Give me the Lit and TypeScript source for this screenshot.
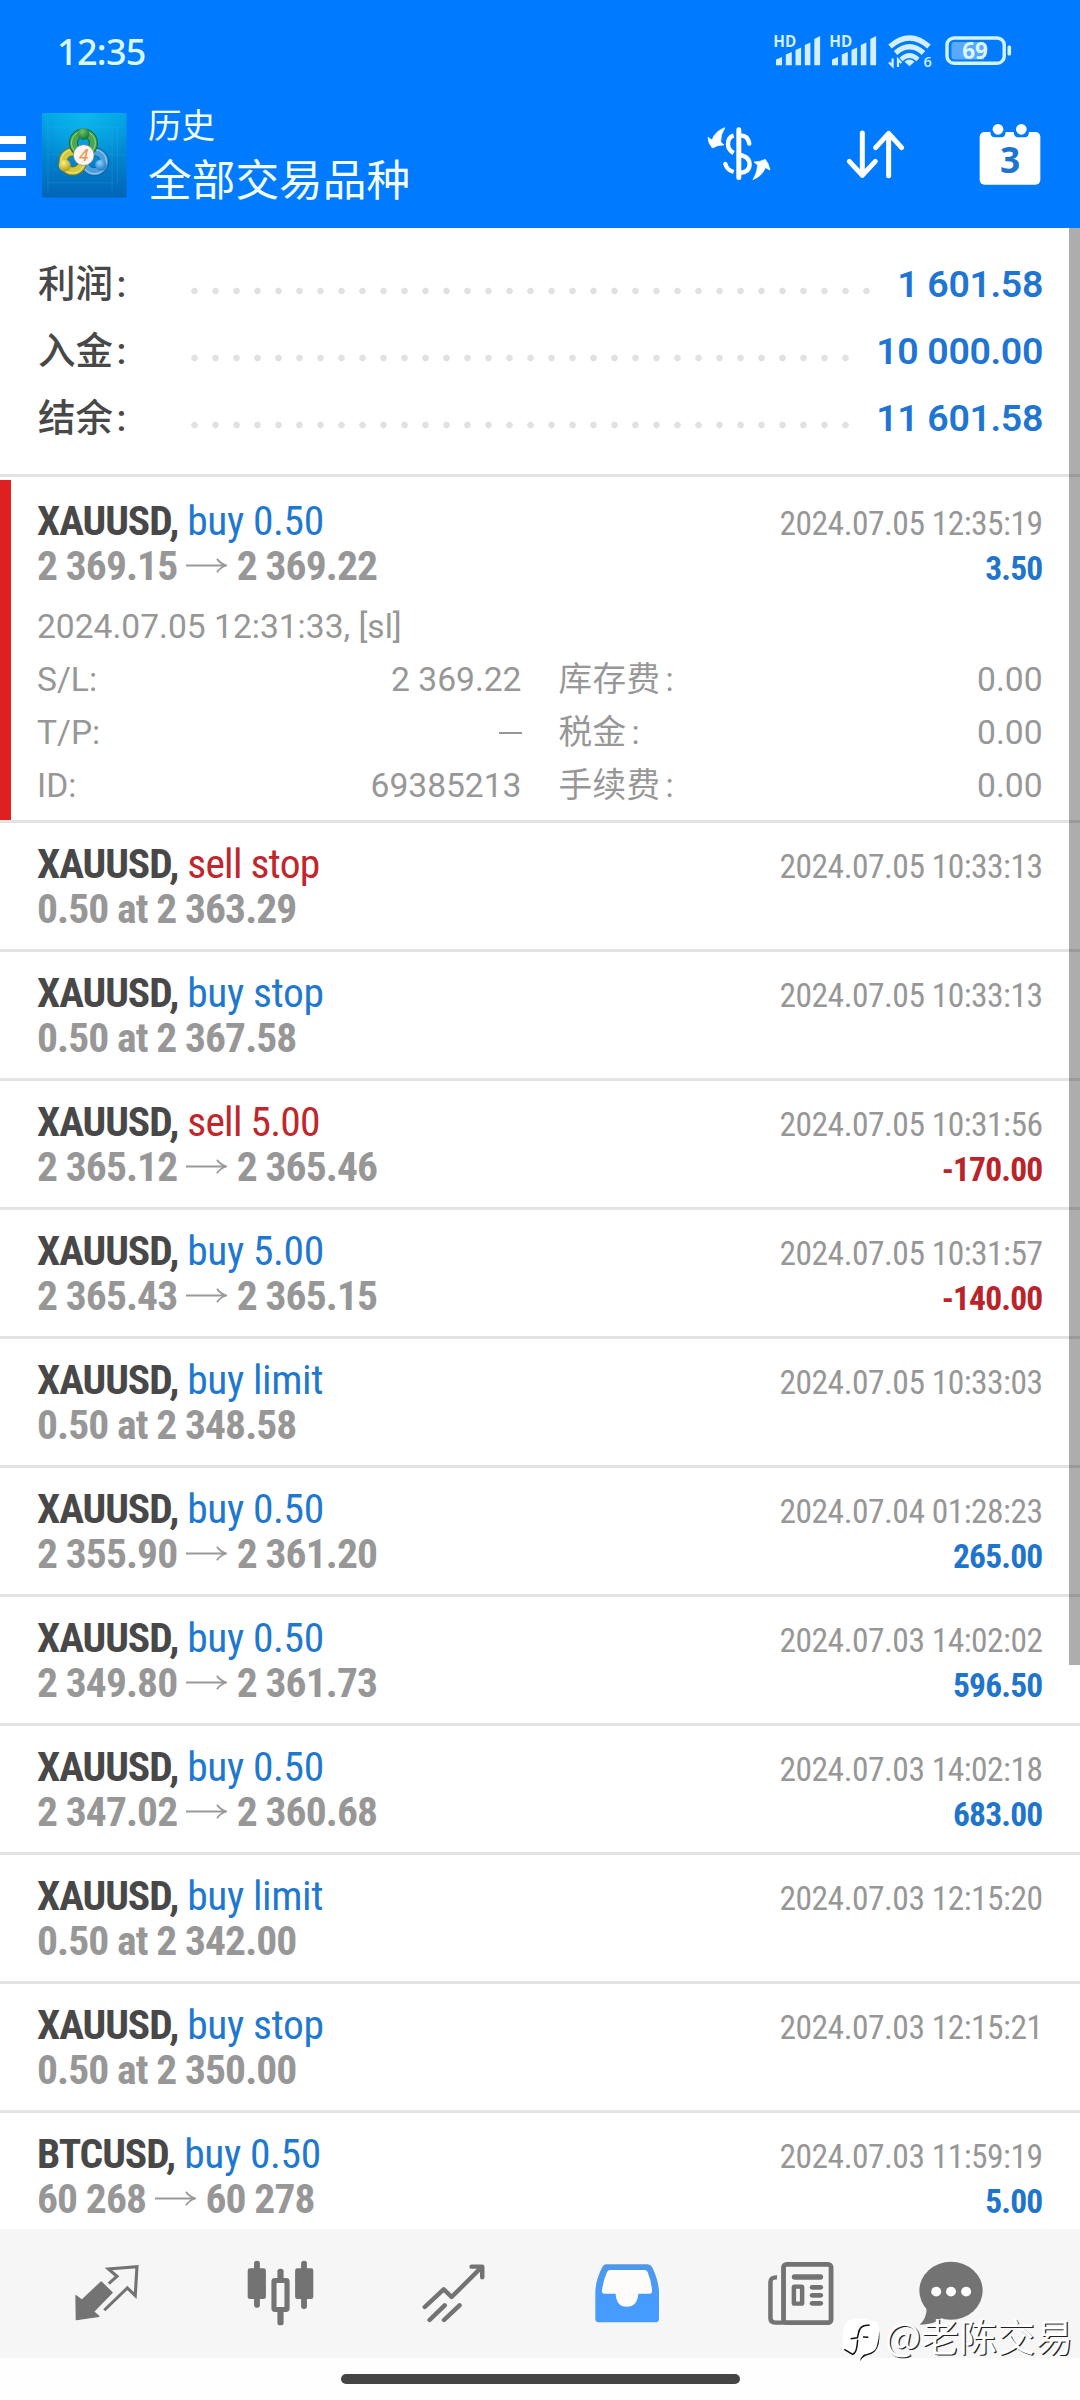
import { LitElement, html, css, nothing } from "lit";
import { customElement, property } from "lit/decorators.js";

interface Deal {
  symbol: string;
  action: string;
  side: "buy" | "sell";
  from: string;
  to?: string;
  time: string;
  profit?: string;
}

const SUMMARY = [
  { label: "利润", value: "1 601.58" },
  { label: "入金", value: "10 000.00" },
  { label: "结余", value: "11 601.58" },
];

const SELECTED: Deal = {
  symbol: "XAUUSD", action: "buy 0.50", side: "buy", from: "2 369.15", to: "2 369.22",
  time: "2024.07.05 12:35:19", profit: "3.50",
};

const DETAILS = [
  ["S/L:", "2 369.22", "库存费", "0.00"],
  ["T/P:", "—", "税金", "0.00"],
  ["ID:", "69385213", "手续费", "0.00"],
];

const DEALS: Deal[] = [
  { symbol: "XAUUSD", action: "sell stop", side: "sell", from: "0.50 at 2 363.29", time: "2024.07.05 10:33:13" },
  { symbol: "XAUUSD", action: "buy stop", side: "buy", from: "0.50 at 2 367.58", time: "2024.07.05 10:33:13" },
  { symbol: "XAUUSD", action: "sell 5.00", side: "sell", from: "2 365.12", to: "2 365.46", time: "2024.07.05 10:31:56", profit: "-170.00" },
  { symbol: "XAUUSD", action: "buy 5.00", side: "buy", from: "2 365.43", to: "2 365.15", time: "2024.07.05 10:31:57", profit: "-140.00" },
  { symbol: "XAUUSD", action: "buy limit", side: "buy", from: "0.50 at 2 348.58", time: "2024.07.05 10:33:03" },
  { symbol: "XAUUSD", action: "buy 0.50", side: "buy", from: "2 355.90", to: "2 361.20", time: "2024.07.04 01:28:23", profit: "265.00" },
  { symbol: "XAUUSD", action: "buy 0.50", side: "buy", from: "2 349.80", to: "2 361.73", time: "2024.07.03 14:02:02", profit: "596.50" },
  { symbol: "XAUUSD", action: "buy 0.50", side: "buy", from: "2 347.02", to: "2 360.68", time: "2024.07.03 14:02:18", profit: "683.00" },
  { symbol: "XAUUSD", action: "buy limit", side: "buy", from: "0.50 at 2 342.00", time: "2024.07.03 12:15:20" },
  { symbol: "XAUUSD", action: "buy stop", side: "buy", from: "0.50 at 2 350.00", time: "2024.07.03 12:15:21" },
  { symbol: "BTCUSD", action: "buy 0.50", side: "buy", from: "60 268", to: "60 278", time: "2024.07.03 11:59:19", profit: "5.00" },
];

/* ---------- status bar icons ---------- */
const signalIcon = html`<svg width="48" height="36" viewBox="773 33 48 36" fill="#d2eeff">
  <text x="773.2" y="47.4" font-family="Open Sans, sans-serif" font-weight="700" font-size="15.4" textLength="23" lengthAdjust="spacingAndGlyphs">HD</text>
  <path d="M776 59.5l6-2.5v8.3h-6zM785.8 54.5l6-2.5v13.3h-6zM795.5 50l5.6-2.5v17.8h-5.6zM804.8 45l5.6-2.5v22.8h-5.6zM814.3 39l5.8-3v29.3h-5.8z"/>
</svg>`;

const wifiIcon = html`<svg width="44" height="36" viewBox="888 33 44 36" fill="none" stroke="#d2eeff" stroke-width="5.2">
  <path d="M890 46.5Q909.5 29.5 929 46.5"/>
  <path d="M895.5 53Q909.5 40.5 923.5 53"/>
  <path d="M901 59.5Q909.5 51.5 918 59.5" stroke-width="4.6"/>
  <path d="M909.5 66.3l-5-4.6q5-4.4 10 0z" fill="#d2eeff" stroke="none"/>
  <path d="M892.6 58.5v7.5l-3.6-3.6M898 67v-7.5l3.3 3.6" stroke-width="2.2"/>
  <text x="923.4" y="67" font-family="Open Sans, sans-serif" font-weight="600" font-size="14.5" fill="#d2eeff" stroke="none">6</text>
</svg>`;

const batteryIcon = html`<svg width="67" height="36" viewBox="945 33 67 36">
  <rect x="947" y="38" width="57.2" height="25.2" rx="7" fill="none" stroke="#d2f3ff" stroke-width="3.4"/>
  <path d="M954.5 42H984v17.5H954.5q-3 0-3-3V45q0-3 3-3z" fill="#5aa9ff"/>
  <rect x="1007.5" y="45.5" width="3.6" height="10" rx="1.5" fill="#d2f3ff"/>
  <text x="975" y="59" text-anchor="middle" font-family="Open Sans, sans-serif" font-weight="700" font-size="22.5" fill="#dcf6ff">69</text>
</svg>`;

/* ---------- toolbar icons ---------- */
const logoIcon = html`<svg width="84.5" height="84.5" viewBox="37 38 253 253">
  <defs>
    <linearGradient id="bg" x1="0" y1="0" x2="0" y2="1"><stop offset="0" stop-color="#02a3e6"/><stop offset=".5" stop-color="#0285cf"/><stop offset="1" stop-color="#0164b6"/></linearGradient>
    <radialGradient id="glow" cx=".5" cy=".05" r=".6"><stop offset="0" stop-color="#10c0f2" stop-opacity=".7"/><stop offset="1" stop-color="#10c0f2" stop-opacity="0"/></radialGradient>
    <radialGradient id="gg" cx=".4" cy=".3" r=".7"><stop offset="0" stop-color="#6fc46a"/><stop offset="1" stop-color="#14743a"/></radialGradient>
    <radialGradient id="gy" cx=".4" cy=".3" r=".7"><stop offset="0" stop-color="#fff27c"/><stop offset="1" stop-color="#b39a1c"/></radialGradient>
    <radialGradient id="gb" cx=".4" cy=".3" r=".7"><stop offset="0" stop-color="#8fd2ff"/><stop offset="1" stop-color="#1d78c0"/></radialGradient>
  </defs>
  <rect x="37" y="38" width="253" height="253" fill="url(#bg)"/>
  <rect x="37" y="38" width="253" height="253" fill="url(#glow)"/>
  <path d="M50 80H280M50 163H290M50 247H255M55 50V280M247 80V270M263 80V250" stroke="#4ab8ee" stroke-width="1.5" opacity=".4"/>
  <g fill="none">
    <circle cx="194" cy="184" r="30" stroke="#1261a4" stroke-width="27"/><circle cx="194" cy="184" r="30" stroke="#4b9fdd" stroke-width="21"/><circle cx="194" cy="184" r="36" stroke="#a8dcfb" stroke-width="2.5"/>
    <circle cx="129" cy="183" r="29" stroke="#6d7a25" stroke-width="27"/><circle cx="129" cy="183" r="29" stroke="#d1c83c" stroke-width="21"/><circle cx="129" cy="183" r="35" stroke="#f6f0a0" stroke-width="2.5"/>
    <circle cx="161" cy="128" r="30" stroke="#176a3a" stroke-width="27"/><circle cx="161" cy="128" r="30" stroke="#49a651" stroke-width="21"/><circle cx="161" cy="128" r="36" stroke="#a3dd9b" stroke-width="2.5"/>
  </g>
  <circle cx="161" cy="101" r="18" fill="url(#gg)"/>
  <circle cx="105" cy="195" r="18" fill="url(#gy)"/>
  <circle cx="213" cy="194" r="17" fill="url(#gb)"/>
  <circle cx="162" cy="164" r="31" fill="#fbf6f2" stroke="#7b8a86" stroke-width="2"/>
  <text x="162" y="182" text-anchor="middle" font-family="Open Sans, sans-serif" font-style="italic" font-weight="600" font-size="50" fill="#eb9a55">4</text>
</svg>`;

const currencyIcon = html`<svg class="currency" width="65.3" height="55.3" viewBox="20 380 196 166" fill="none" stroke="#fff" stroke-width="13">
  <path d="M103 409Q86 413 86 435Q86 452 103 461"/>
  <path d="M103 518Q82 512 78 493"/>
  <path d="M122 408Q146 407 150 433" stroke-linecap="round"/>
  <path d="M120 467Q151 472 151 496Q150 519 120 521"/>
  <rect x="111" y="384" width="15" height="158" rx="7" fill="#fff" stroke="none"/>
  <circle cx="78" cy="493" r="6" fill="#fff" stroke="none"/>
  <path d="M77 385Q48 394 38 422L26 414Q26 432 39 446Q56 436 74 437L64 428Q64 405 77 385Z" fill="#fff" stroke-width="2"/>
  <path d="M161 541Q189 530 198 505L212 512Q209 493 198 480Q181 488 164 488L175 497Q174 520 161 541Z" fill="#fff" stroke-width="2"/>
</svg>`;

const sortIcon = html`<svg width="59.3" height="48.7" viewBox="438 390 178 146" fill="none" stroke="#fff" stroke-width="15" stroke-linecap="round" stroke-linejoin="round">
  <path d="M487 399V526M448 484L487 526L526 484M566 527V401M527 443L566 400L605 443"/>
</svg>`;

const calendarIcon = html`<svg width="62" height="62.7" viewBox="838 366 186 188">
  <rect x="840" y="393" width="182" height="158" rx="14" fill="#fff"/>
  <path d="M872 391H918Q918 409 905 409H885Q872 409 872 391ZM942 391H988Q988 409 975 409H955Q942 409 942 391Z" fill="#007aff"/>
  <circle cx="895" cy="385" r="16" fill="#fff"/><circle cx="965" cy="385" r="16" fill="#fff"/>
  <text x="931" y="516" text-anchor="middle" font-family="Open Sans, sans-serif" font-weight="700" font-size="106" fill="#1c74cf">3</text>
</svg>`;

/* ---------- bottom navigation icons ---------- */
const navIcons = [
  html`<svg width="63.7" height="55.3" viewBox="220 437 185 166" preserveAspectRatio="none" fill="#737373">
    <path d="M223 529L240 543L296 488L328 520L274 577L289 591L224 601Z" stroke="#737373" stroke-width="4" stroke-linejoin="round"/>
    <path d="M318 493L342 471L317 449L400 442L395 529L372 506L305 573" fill="none" stroke="#737373" stroke-width="9"/>
  </svg>`,
  html`<svg width="67" height="65.3" viewBox="716 420 195 196" preserveAspectRatio="none" fill="#737373">
    <rect x="718" y="445" width="53" height="92" rx="7"/><rect x="736.5" y="422" width="17" height="141" rx="8"/>
    <rect x="856" y="445" width="53" height="92" rx="7"/><rect x="873.5" y="422" width="17" height="145" rx="8"/>
    <rect x="794.5" y="481.5" width="38" height="87" rx="3" fill="none" stroke="#737373" stroke-width="15"/>
    <rect x="804.5" y="446" width="18" height="36" rx="8"/><rect x="804.5" y="570" width="18" height="46" rx="8"/>
  </svg>`,
  html`<svg width="63" height="58.7" viewBox="1224 428 183 176" preserveAspectRatio="none" fill="none" stroke="#737373" stroke-width="13" stroke-linecap="round" stroke-linejoin="round">
    <path d="M1232 557L1287 504L1310 527L1397 438M1368 436H1399V468M1246 596L1290 552M1288 596L1333 552"/>
  </svg>`,
  html`<svg width="64" height="58.7" viewBox="160 428 186 176" preserveAspectRatio="none">
    <defs><linearGradient id="tray" x1="0" y1="0" x2="0" y2="1"><stop offset="0" stop-color="#5098e6"/><stop offset=".6" stop-color="#459bff"/></linearGradient></defs>
    <path fill="url(#tray)" d="M192 429H314Q322 430 327 439Q345 478 346 512V592Q346 603 335 603H172Q161 603 161 592V512Q162 475 181 438Q185 429 192 429Z"/>
    <path fill="#fdfcfa" d="M204 446H304Q310 446 313 452Q324 480 326 509Q326 517 319 517H286Q283 556 252 556Q222 556 220 517H186Q180 517 180 509Q183 480 195 452Q198 446 204 446Z"/>
  </svg>`,
  html`<svg width="67.5" height="64.7" viewBox="662 418 196 194" preserveAspectRatio="none" fill="#737373">
    <g fill="none" stroke="#737373" stroke-width="14"><rect x="710" y="428" width="138" height="175" rx="9"/>
    <path d="M691 467Q672 466 672 482V590Q672 603 686 603H715" stroke-width="13"/><rect x="740" y="495" width="24" height="51" rx="2" stroke-width="13"/></g>
    <rect x="734" y="458" width="91" height="16" rx="8"/><rect x="786" y="490" width="39" height="14" rx="7"/><rect x="786" y="514" width="39" height="14" rx="7"/><rect x="786" y="538" width="39" height="14" rx="7"/>
  </svg>`,
  html`<svg width="64" height="64.7" viewBox="1100 418 186 194" preserveAspectRatio="none" fill="#737373">
    <ellipse cx="1193" cy="507" rx="92" ry="87"/><path d="M1122 555Q1124 588 1102 609Q1146 609 1166 588Z"/>
    <g fill="#fff"><circle cx="1150" cy="510" r="14.5"/><circle cx="1193" cy="510" r="14.5"/><circle cx="1237" cy="510" r="14.5"/></g>
  </svg>`,
];

const arrowIcon = html`<svg class="arrow" width="41" height="15" viewBox="0 0 41 15" fill="none" stroke="#999" stroke-width="1.8">
  <path d="M0 7.5H39M31 .7Q34 5.5 40.5 7.5Q34 9.5 31 14.3"/>
</svg>`;

@customElement("deal-head")
class DealHead extends LitElement {
  @property({ attribute: false }) deal!: Deal;

  static styles = css`
    :host { display: block; font-family: "Roboto Condensed", Roboto, sans-serif; white-space: nowrap; }
    .line { display: flex; justify-content: space-between; align-items: baseline; height: 45px; line-height: 45px; }
    .title { font-size: 41.5px; letter-spacing: -0.4px; }
    .symbol { font-weight: 700; color: #484848; letter-spacing: -1.05px; margin-right: 9px; }
    .buy { color: #1f78d0; }
    .sell { color: #c0262c; letter-spacing: -0.75px; }
    .price { font-size: 41.5px; font-weight: 700; color: #979797; letter-spacing: -0.9px; }
    .arrow { margin: 0 9.5px 7px 9px; }
    .time { font-size: 33.5px; color: #979797; letter-spacing: -0.5px; }
    .profit { font-size: 33.5px; font-weight: 700; color: #1f75cb; letter-spacing: -0.8px; }
    .loss { color: #b92329; }
  `;

  render() {
    const d = this.deal;
    return html`
      <div class="line">
        <span class="title"><span class="symbol">${d.symbol},</span><span class=${d.side}>${d.action}</span></span>
        <span class="time">${d.time}</span>
      </div>
      <div class="line">
        <span class="price">${d.from}${d.to ? html`${arrowIcon}${d.to}` : nothing}</span>
        ${d.profit ? html`<span class="profit ${d.profit.startsWith("-") ? "loss" : ""}">${d.profit}</span>` : nothing}
      </div>
    `;
  }
}

@customElement("app-root")
class AppRoot extends LitElement {
  static styles = css`
    :host { display: flex; flex-direction: column; position: relative; width: 1080px; height: 2400px; overflow: hidden; background: #fff;
      font-family: Roboto, "Noto Sans CJK SC", sans-serif; }
    svg { display: block; flex: none; overflow: visible; }
    .header { height: 228px; flex: none; box-sizing: border-box; background: #007aff; color: #f2fdff; }
    .status { display: flex; align-items: center; height: 102px; padding: 0 68px 0 57px; }
    .clock { flex: 1; font: 500 36px/101px "Noto Sans", sans-serif; letter-spacing: -0.7px; color: #d8faff; }
    .signals { display: flex; gap: 8px; margin-right: 11px; }
    .wifi { margin-right: 13px; }
    .toolbar { display: flex; align-items: center; height: 106px; padding-right: 39px; }
    .menu { display: flex; flex-direction: column; gap: 8.6px; width: 26px; margin-right: 16px; padding-top: 2px; }
    .menu i { height: 7.3px; background: #fff; }
    .titles { flex: 1; margin-left: 21.5px; white-space: nowrap; }
    .caption { font-size: 33.6px; line-height: 50px; padding-top: 1px; }
    .heading { font-size: 43.7px; line-height: 58px; }
    .actions { display: flex; align-items: center; gap: 74px; margin-top: -2px; }
    .currency { margin-right: 0.5px; }

    .content { height: 2001px; flex: none; overflow: hidden; }
    .summary { box-sizing: border-box; height: 249px; padding: 22.5px 37px 0 38px; border-bottom: 3px solid #e3e3e3; font-size: 37.5px; font-weight: 500; }
    .sum { display: flex; align-items: baseline; height: 67px; line-height: 67px; }
    .label { width: 145.5px; color: #484848; }
    .label .colon { margin-left: 3.5px; }
    .dots { flex: 1; align-self: center; height: 8px; margin-right: 20px; margin-top: 14px;
      background: radial-gradient(circle at 10.5px 4px, #e1e1e1 2.8px, transparent 3.8px) 0 0 / 21px 8px repeat-x; }
    .value { font-weight: 600; color: #1f75d3; letter-spacing: -0.35px; }

    .selected { box-sizing: border-box; height: 340px; margin-top: 3px; padding: 18px 37.5px 0 26px; border-left: 11px solid #df2020; }
    .details { margin-top: 12px; font-size: 33.6px; line-height: 53px; color: #979797; }
    .detail { display: grid; grid-template-columns: 80px 404.5px 1fr 100px; height: 53px; }
    .num { text-align: right; }
    .fee { padding-left: 37px; letter-spacing: 0.4px; }
    .fee .colon { margin-left: 5px; }
    .dash { display: block; width: 23px; height: 2.5px; background: #979797; margin: 25.5px 0 0 auto; }
    .row { display: block; box-sizing: border-box; height: 129px; border-top: 3px solid #e3e3e3; padding: 18px 37.5px 0 37px; }

    .nav { display: flex; align-items: center; flex: none; height: 129px; padding: 0 0 1px 20px; background: #f6f6f6; box-sizing: border-box; }
    .tab { display: flex; justify-content: center; width: 173.5px; }
    .tab:last-child { width: 126px; }
    .home { display: flex; justify-content: center; flex: 1; background: #fefefe; }
    .pill { width: 399px; height: 10px; margin-top: 16px; border-radius: 5px; background: #444; }

    .scroll { position: absolute; right: 0; top: 228px; width: 11px; height: 1437px; background: rgba(0, 0, 0, 0.32); }
    .mark { position: absolute; left: 841px; top: 2312px; display: flex; align-items: center; height: 56px; color: #fff;
      font: 400 38px/54px "Noto Sans CJK SC", sans-serif; text-shadow: 1.3px 1.3px 0 #222; white-space: nowrap; }
    .mark svg { margin-right: 2px; }
    .author { padding-bottom: 11px; }
  `;

  render() {
    return html`
      <header class="header">
        <div class="status">
          <span class="clock">12:35</span>
          <div class="signals">${signalIcon}${signalIcon}</div>
          <div class="wifi">${wifiIcon}</div>
          ${batteryIcon}
        </div>
        <div class="toolbar">
          <div class="menu"><i></i><i></i><i></i></div>
          ${logoIcon}
          <div class="titles">
            <div class="caption">历史</div>
            <div class="heading">全部交易品种</div>
          </div>
          <div class="actions">${currencyIcon}${sortIcon}${calendarIcon}</div>
        </div>
      </header>
      <main class="content">
        <section class="summary">
          ${SUMMARY.map((s) => html`<div class="sum"><span class="label">${s.label}<span class="colon">:</span></span><span class="dots"></span><span class="value">${s.value}</span></div>`)}
        </section>
        <section class="selected">
          <deal-head .deal=${SELECTED}></deal-head>
          <div class="details">
            <div>2024.07.05 12:31:33, [sl]</div>
            ${DETAILS.map(([k, v, fee, amount]) => html`<div class="detail">
              <span>${k}</span><span class="num">${v === "—" ? html`<i class="dash"></i>` : v}</span>
              <span class="fee">${fee}<span class="colon">:</span></span><span class="num">${amount}</span>
            </div>`)}
          </div>
        </section>
        ${DEALS.map((d) => html`<div class="row"><deal-head .deal=${d}></deal-head></div>`)}
      </main>
      <nav class="nav">${navIcons.map((icon) => html`<span class="tab">${icon}</span>`)}</nav>
      <div class="home"><div class="pill"></div></div>
      <div class="scroll"></div>
      <div class="mark">
        <svg width="42" height="46" viewBox="32 28 126 138">
          <path d="M50 40Q92 26 138 42Q152 62 149 100Q147 132 118 140Q100 144 90 160Q88 146 76 143Q44 138 38 120Q32 66 50 40Z" fill="#fff"/>
          <path d="M147 68Q150 118 133 132Q122 142 106 144Q96 148 89 161Q91 148 100 141Q132 136 139 118Q146 96 147 68Z" fill="#111"/>
          <path d="M118 53Q88 49 84 78L81 91M61 93L82 90M98 88L114 89M82 96Q80 136 67 140L42 125" fill="none" stroke="#111" stroke-width="4.5"/>
        </svg>
        <span class="author">@老陈交易</span>
      </div>
    `;
  }
}
